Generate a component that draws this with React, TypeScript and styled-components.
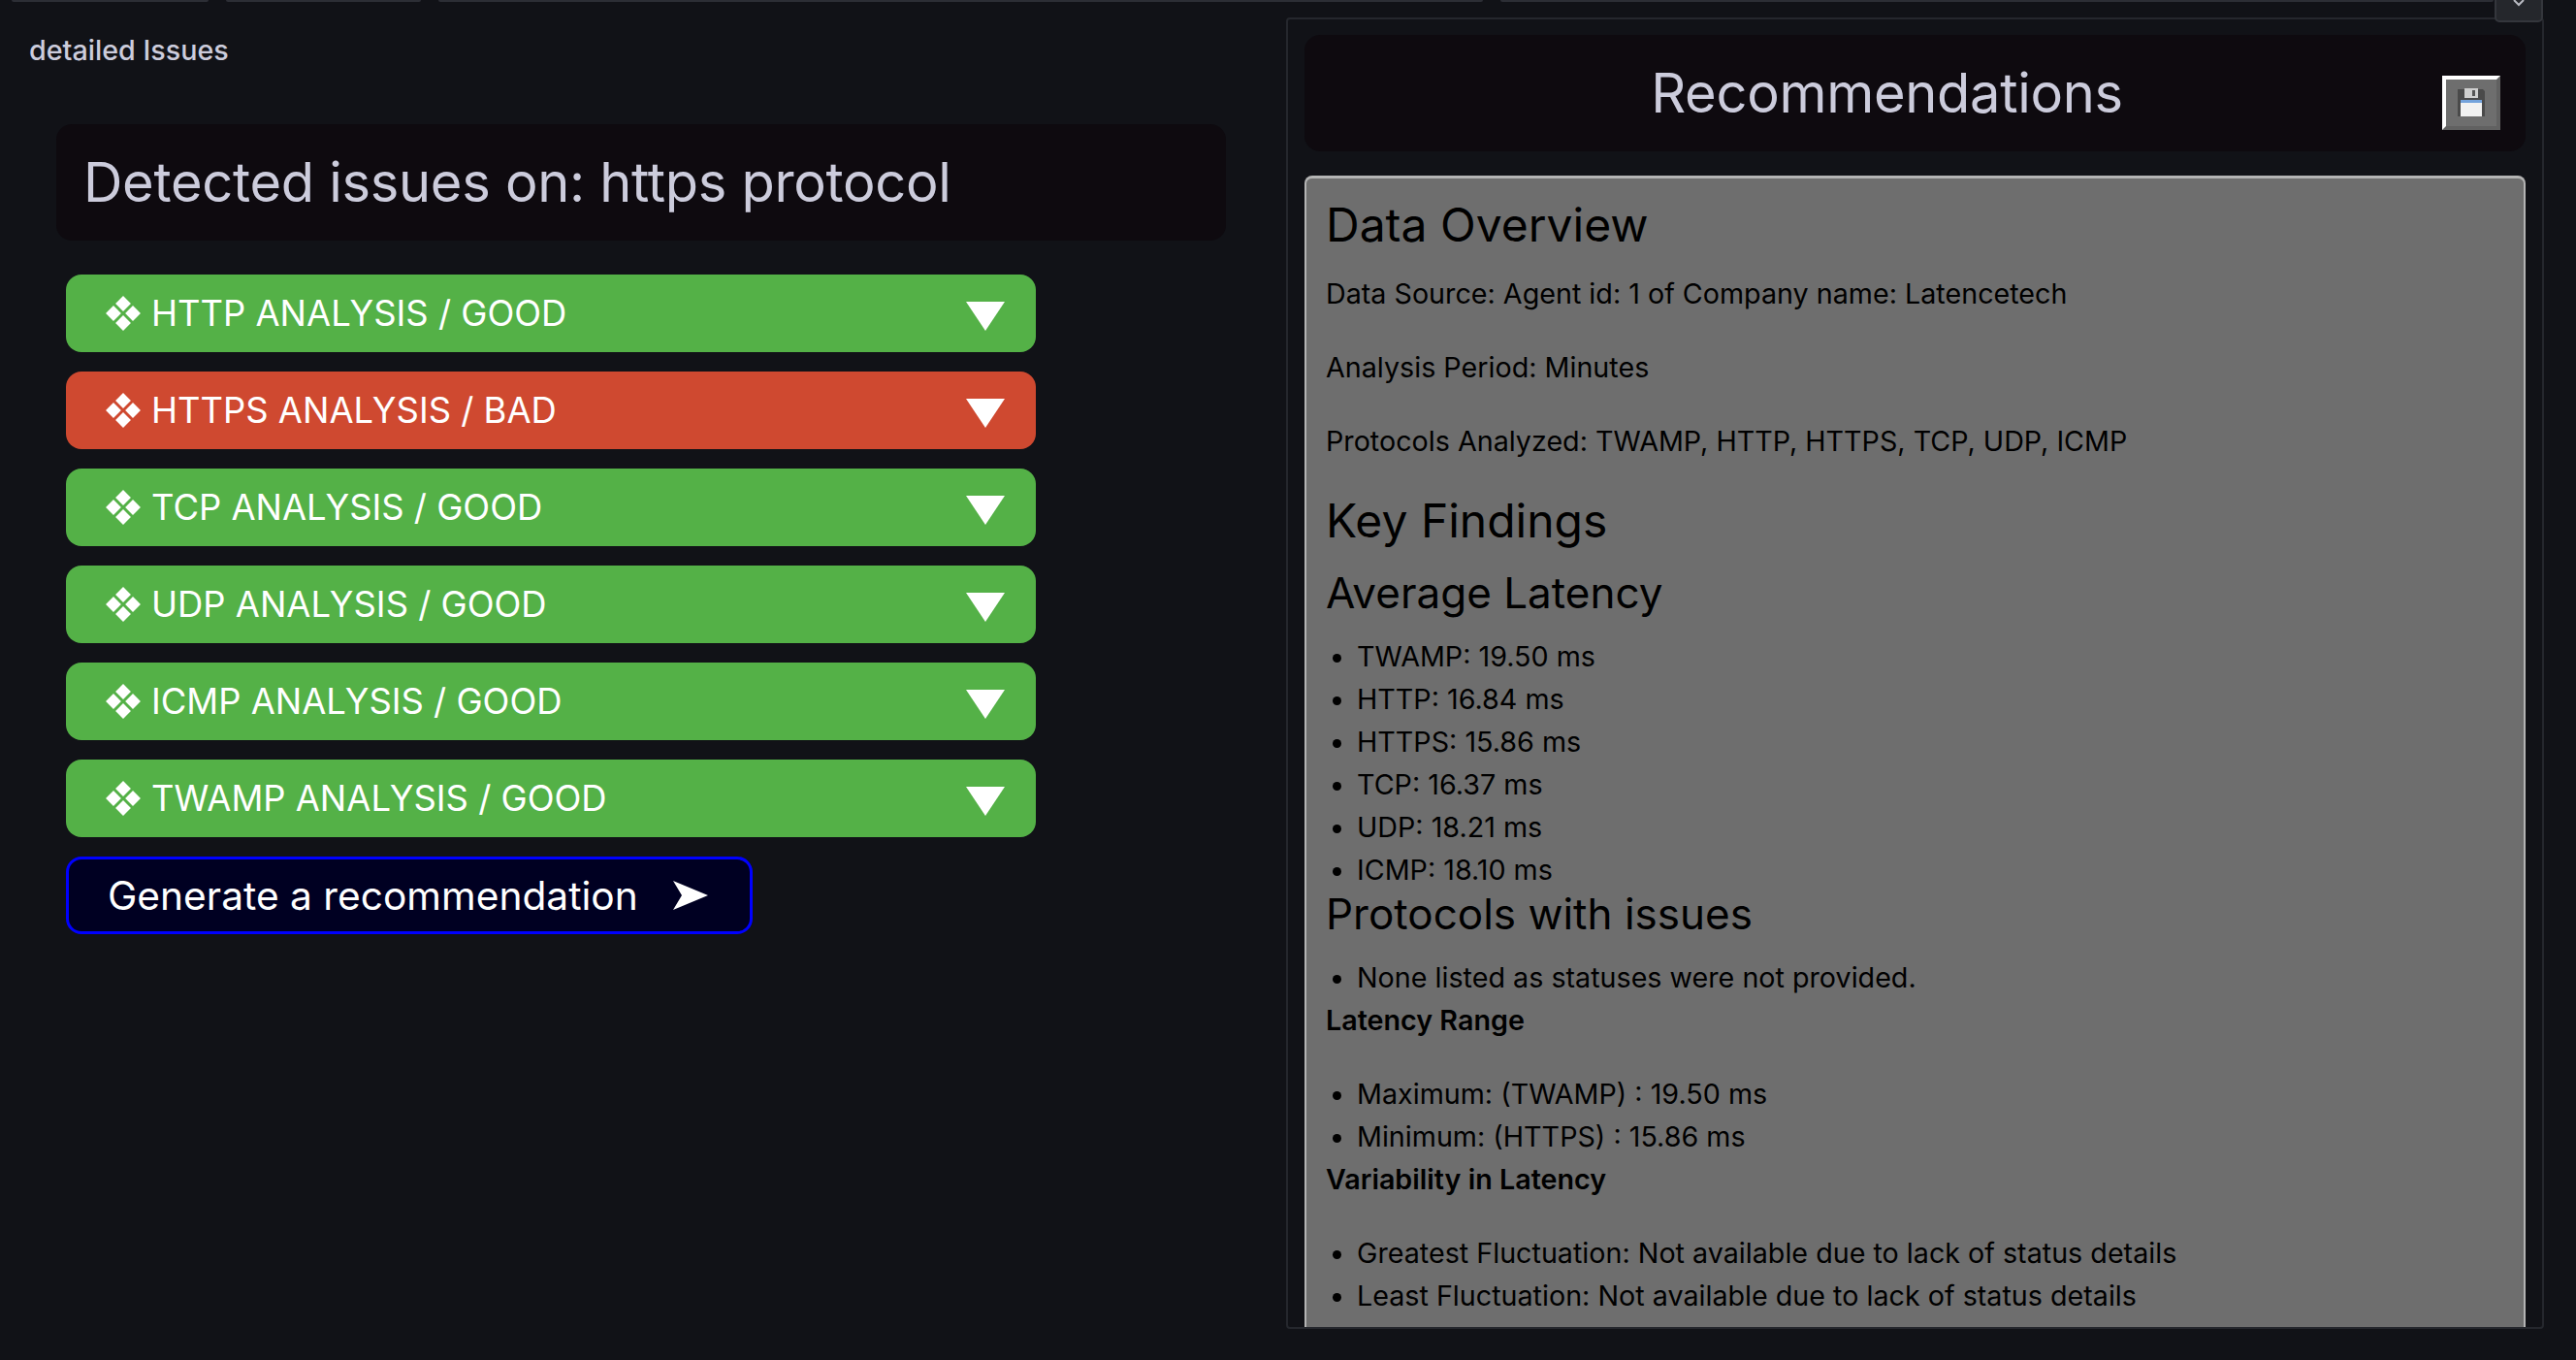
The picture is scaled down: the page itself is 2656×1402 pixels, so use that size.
import styled, { createGlobalStyle } from 'styled-components';

const GlobalStyle = createGlobalStyle`
    html, body {
        margin: 0;
        padding: 0;
        background: #111217;
        overflow: hidden;
    }
    body {
        font-family: Inter, "Liberation Sans", sans-serif;
    }
`

const ANALYSES = [
    { name: 'HTTP', status: 'GOOD' },
    { name: 'HTTPS', status: 'BAD' },
    { name: 'TCP', status: 'GOOD' },
    { name: 'UDP', status: 'GOOD' },
    { name: 'ICMP', status: 'GOOD' },
    { name: 'TWAMP', status: 'GOOD' },
]

const Page = styled.div`
    position: relative;
    width: 2656px;
    height: 1402px;
    background: #111217;
    overflow: hidden;
`

const TabStrip = styled.div`
    display: flex;
    height: 2px;
    padding-left: 12px;
    gap: 18px;
`

const TabLine = styled.div<{ $width: number }>`
    width: ${p => p.$width}px;
    background: #2c2e35;
    border-radius: 0 0 3px 3px;
`

const CollapseTab = styled.div`
    position: absolute;
    top: -2px;
    right: 34px;
    width: 50px;
    height: 25px;
    box-sizing: border-box;
    background: #25272c;
    border: 2px solid #34363c;
    border-radius: 0 0 5px 5px;
    display: flex;
    justify-content: center;
    color: #b9bac2;
    z-index: 2;
`

const Columns = styled.div`
    display: flex;
    align-items: flex-start;
    height: 1400px;
`

const LeftPanel = styled.section`
    width: 1326px;
    flex: none;
`

const PanelTitle = styled.div`
    padding: 33px 0 0 30px;
    height: 33px;
    font-size: 28.7px;
    line-height: 34px;
    font-weight: 500;
    color: #ccccdc;
`

const LeftBody = styled.div`
    padding: 60px 62px 0 58px;
`

const TitleBox = styled.div`
    height: 120px;
    box-sizing: border-box;
    padding: 0 0 0 28px;
    display: flex;
    align-items: center;
    background: #0e0a0f;
    border-radius: 16px;
    font-size: 56px;
    letter-spacing: -0.3px;
    color: #ccccdc;
`

const Analyses = styled.div`
    display: flex;
    flex-direction: column;
    gap: 20px;
    width: 1000px;
    margin: 35px 0 0 10px;
`

const AnalysisRow = styled.div<{ $bad: boolean }>`
    height: 80px;
    box-sizing: border-box;
    padding: 0 32px 0 40px;
    display: flex;
    align-items: center;
    justify-content: space-between;
    background: ${p => (p.$bad ? '#cf4930' : '#54b147')};
    border-radius: 16px;
    color: #fff;
    font-size: 36.4px;
`

const RowLabel = styled.span`
    display: flex;
    align-items: center;
    gap: 10px;
`

const CaretSlot = styled.span`
    display: flex;
    margin-top: 6px;
`

const GenerateButton = styled.button`
    width: 708px;
    height: 80px;
    margin: 20px 0 0 10px;
    padding: 0 40px;
    box-sizing: border-box;
    display: flex;
    align-items: center;
    gap: 36px;
    background: #000022;
    border: 3px solid #0000ff;
    border-radius: 16px;
    color: #fff;
    font-family: inherit;
    font-size: 40.7px;
    white-space: nowrap;
`

const RightPanel = styled.section`
    width: 1297px;
    height: 1352px;
    flex: none;
    margin-top: 16px;
    box-sizing: border-box;
    padding: 16px 17px 0 17px;
    border: 2px solid #25272d;
    border-radius: 4px;
    overflow: hidden;
`

const RecHeader = styled.div`
    height: 120px;
    box-sizing: border-box;
    padding-right: 26px;
    display: flex;
    align-items: center;
    background: #0e0a0f;
    border-radius: 16px;
`

const RecTitle = styled.div`
    flex: 1;
    text-align: center;
    font-size: 56px;
    letter-spacing: -0.3px;
    color: #ccccdc;
    padding-left: 28px;
`

const SaveButton = styled.button`
    width: 60px;
    height: 56px;
    margin-top: 20px;
    box-sizing: border-box;
    padding: 0;
    display: flex;
    align-items: center;
    justify-content: center;
    background: #6e6e6e;
    border: 4px outset #b5b5b5;
    border-top-color: #fff;
    border-left-color: #fff;
`

const Report = styled.article`
    height: 1200px;
    margin-top: 25px;
    box-sizing: border-box;
    padding: 19px 20px 0 20px;
    background: #6e6e6e;
    border: 2px solid #b4b4b4;
    border-top-width: 3px;
    border-bottom: none;
    border-radius: 8px 8px 0 0;
    color: #000;
    font-size: 28.7px;
    line-height: 44px;
`

const H2 = styled.h2<{ $pull?: boolean }>`
    margin: ${p => (p.$pull ? '-1px' : '0')} 0 20px;
    font-size: 48px;
    line-height: 58px;
    font-weight: 400;
`

const H3 = styled.h3`
    margin: 0 0 19px;
    font-size: 44px;
    line-height: 50px;
    font-weight: 400;
`

const Para = styled.p`
    margin: 0 0 32px;
`

const Strong = styled.p`
    margin: 0 0 32px;
    font-weight: 600;
`

const List = styled.ul<{ $tight?: boolean }>`
    margin: 0 0 ${p => (p.$tight ? '-2px' : '0')};
    padding: 0 0 0 32px;
`

function Diamonds() {
    return <svg width="38" height="38" viewBox="0 0 36 36" fill="#fff">
        <path d="M18 1 L25.500 8.500 L18 16 L10.500 8.500 Z" />
        <path d="M18 20 L25.500 27.500 L18 35 L10.500 27.500 Z" />
        <path d="M8.500 10.500 L16 18 L8.500 25.500 L1 18 Z" />
        <path d="M27.500 10.500 L35 18 L27.500 25.500 L20 18 Z" />
    </svg>
}

function Caret() {
    return <svg width="40" height="30" viewBox="0 0 40 30" fill="#fff">
        <path d="M0 0 H40 L20 30 Z" />
    </svg>
}

function Arrow() {
    return <svg width="36" height="30" viewBox="0 0 36 30" fill="#fff">
        <path d="M0 0 L36 15 L0 30 L9 15 Z" />
    </svg>
}

function FloppyIcon() {
    return <svg width="28" height="30" viewBox="0 0 28 30">
        <path d="M0 1 H26 L28 3 V29 H0 Z" fill="#4a4a4a" />
        <rect x="7" y="0" width="14" height="10" fill="#cfcfcf" />
        <rect x="15" y="2" width="3" height="6" fill="#555" />
        <rect x="3" y="12" width="22" height="17" fill="#f1f1f1" />
        <rect x="3" y="12" width="22" height="3" fill="#74a3dc" />
    </svg>
}

function ChevronTip() {
    return <svg width="14" height="8" viewBox="0 0 14 8" fill="none" stroke="#b9bac2" strokeWidth="2">
        <path d="M2 0 L7 5 L12 0" />
    </svg>
}

export default function App() {
    return <Page>
        <GlobalStyle />
        <TabStrip>
            <TabLine $width={203} />
            <TabLine $width={201} />
            <TabLine $width={1077} />
            <TabLine $width={1024} />
        </TabStrip>
        <CollapseTab><ChevronTip /></CollapseTab>
        <Columns>
            <LeftPanel>
                <PanelTitle>detailed Issues</PanelTitle>
                <LeftBody>
                    <TitleBox>Detected issues on: https protocol</TitleBox>
                    <Analyses>
                        {ANALYSES.map(a => <AnalysisRow key={a.name} $bad={a.status === 'BAD'}>
                            <RowLabel><Diamonds />{a.name} ANALYSIS / {a.status}</RowLabel>
                            <CaretSlot><Caret /></CaretSlot>
                        </AnalysisRow>)}
                    </Analyses>
                    <GenerateButton>Generate a recommendation <Arrow /></GenerateButton>
                </LeftBody>
            </LeftPanel>
            <RightPanel>
                <RecHeader>
                    <RecTitle>Recommendations</RecTitle>
                    <SaveButton><FloppyIcon /></SaveButton>
                </RecHeader>
                <Report>
                    <H2>Data Overview</H2>
                    <Para>Data Source: Agent id: 1 of Company name: Latencetech</Para>
                    <Para>Analysis Period: Minutes</Para>
                    <Para>Protocols Analyzed: TWAMP, HTTP, HTTPS, TCP, UDP, ICMP</Para>
                    <H2 $pull>Key Findings</H2>
                    <H3>Average Latency</H3>
                    <List $tight>
                        <li>TWAMP: 19.50 ms</li>
                        <li>HTTP: 16.84 ms</li>
                        <li>HTTPS: 15.86 ms</li>
                        <li>TCP: 16.37 ms</li>
                        <li>UDP: 18.21 ms</li>
                        <li>ICMP: 18.10 ms</li>
                    </List>
                    <H3>Protocols with issues</H3>
                    <List>
                        <li>None listed as statuses were not provided.</li>
                    </List>
                    <Strong>Latency Range</Strong>
                    <List>
                        <li>Maximum: (TWAMP) : 19.50 ms</li>
                        <li>Minimum: (HTTPS) : 15.86 ms</li>
                    </List>
                    <Strong>Variability in Latency</Strong>
                    <List>
                        <li>Greatest Fluctuation: Not available due to lack of status details</li>
                        <li>Least Fluctuation: Not available due to lack of status details</li>
                    </List>
                </Report>
            </RightPanel>
        </Columns>
    </Page>
}
